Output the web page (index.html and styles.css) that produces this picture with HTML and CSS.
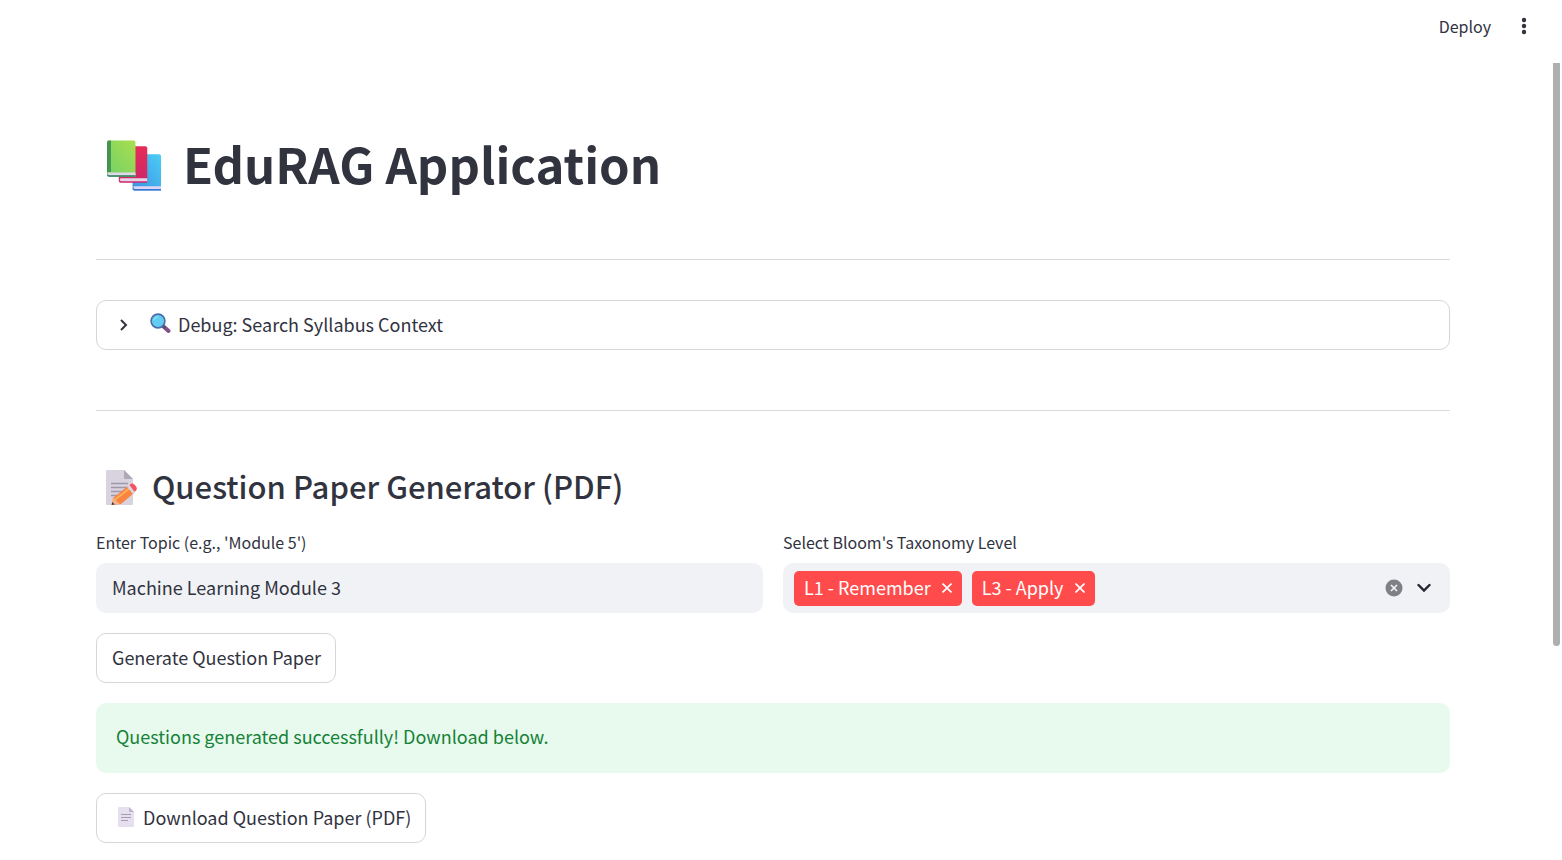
FILE: index.html
```html
<!DOCTYPE html>
<html lang="en">
	<head>
		<meta charset="UTF-8">
		<title>EduRAG Application</title>
		<link rel="stylesheet" href="styles.css">
	</head>
	<body>
		<header class="toolbar">
			<button type="button" class="deploy">Deploy</button>
			<button type="button" class="menu" aria-label="Main menu">
				<svg width="20" height="20" viewBox="0 0 20 20" fill="#31333f">
					<circle cx="10" cy="4" r="2.2"/>
					<circle cx="10" cy="10" r="2.2"/>
					<circle cx="10" cy="16" r="2.2"/>
				</svg>
			</button>
		</header>

		<main class="container">
			<h1 class="title">
				<svg class="books" width="55" height="52" viewBox="0 0 56 52" aria-hidden="true">
					<defs>
						<linearGradient id="green" x1="1" y1="0" x2="0" y2="1">
							<stop offset="0" stop-color="#a9df4e"/>
							<stop offset="1" stop-color="#73cf68"/>
						</linearGradient>
						<linearGradient id="blue" x1="1" y1="0" x2="0" y2="1">
							<stop offset="0" stop-color="#4ccdf5"/>
							<stop offset="1" stop-color="#3c91e2"/>
						</linearGradient>
						<linearGradient id="red" x1="0" y1="0" x2="0" y2="1">
							<stop offset="0" stop-color="#e52c57"/>
							<stop offset="1" stop-color="#cb2869"/>
						</linearGradient>
					</defs>
					<path d="M28 14h25q2 0 2 2v35H28q-2 0-2-2V16q0-2 2-2z" fill="url(#blue)"/>
					<path d="M28 46.500h27v3H28.500q-1.500 0-1.500-1.500t1-1.500z" fill="#ded5f5"/>
					<path d="M26 49q0 2 2 2h27v-1.500H28z" fill="#3977d7"/>
					<path d="M14 6h25q2 0 2 2v35H14q-2 0-2-2V8q0-2 2-2z" fill="url(#red)"/>
					<path d="M14.500 38.500H41v3H14.500q-1.500 0-1.500-1.500t1.500-1.500z" fill="#e6d5e9"/>
					<path d="M2 0h25q2 0 2 2v35H2q-2 0-2-2V2q0-2 2-2z" fill="url(#green)"/>
					<path d="M2 0h2v32H0V2q0-2 2-2z" fill="#439451"/>
					<path d="M2 32.500h27v3.200H2q-1.500 0-1.500-1.600T2 32.500z" fill="#e2d7ec"/>
					<path d="M0 34.500q0 2.500 2 2.500h27v-1.500H2z" fill="#318066"/>
				</svg>
				EduRAG Application
			</h1>

			<hr class="line">

			<details class="expander">
				<summary>
					<svg class="arrow" width="10" height="14" viewBox="0 0 10 14" fill="none" stroke="#31333f" stroke-width="2"><path d="M2 2l5 5-5 5"/></svg>
					<svg class="search" width="21" height="21" viewBox="0 0 21 21" aria-hidden="true">
						<path d="M13 13l5.500 5" stroke="#835087" stroke-width="4" stroke-linecap="round"/>
						<path d="M12.500 12.500l2.500 2.500" stroke="#4d4f78" stroke-width="2.500"/>
						<circle cx="8" cy="8" r="6.900" fill="#62cdf1" stroke="#4c6ca9" stroke-width="1.600"/>
						<path d="M4 7q1-3 4-3.500" fill="none" stroke="#8fe0f8" stroke-width="1.200"/>
					</svg>
					Debug: Search Syllabus Context
				</summary>
			</details>

			<hr class="line second">

			<h2 class="subtitle">
				<svg class="memo" width="32" height="36" viewBox="0 0 32 36" aria-hidden="true">
					<path d="M1 0h17l9 9v25q0 1-1 1H1q-1 0-1-1V1q0-1 1-1z" fill="#d8d3df"/>
					<path d="M18 0l9 9h-8q-1 0-1-1z" fill="#afa8b8"/>
					<path d="M5 13.500h17M5 17.500h17M5 21.500h14M5 25.500h8" stroke="#9e98aa" stroke-width="1.300"/>
					<path d="M7 28L22 16l6 7-13 11-9 1z" fill="#f98442"/>
					<path d="M8.500 30L24 18" stroke="#ffad57" stroke-width="2"/>
					<path d="M7 28l7 6-8 1z" fill="#f6b184"/>
					<path d="M6.300 32l2.500 2.500L5.500 35z" fill="#4b3540"/>
					<path d="M21 17l2.500-2 6 7-2.500 2z" fill="#ddd2e2"/>
					<path d="M23.500 15l1.500-1.200q1.800-1 3.300.7l2 2.300q1.300 1.800-.1 3.500l-1.700 1.500z" fill="#f2535c"/>
				</svg>
				Question Paper Generator (PDF)
			</h2>

			<div class="row">
				<div class="col">
					<label for="topic">Enter Topic (e.g., 'Module 5')</label>
					<input type="text" id="topic" class="field" value="Machine Learning Module 3">
				</div>
				<div class="col">
					<label id="level">Select Bloom's Taxonomy Level</label>
					<div class="field select" role="group" aria-labelledby="level">
						<span class="tag">L1 - Remember
							<button type="button" aria-label="Remove L1 - Remember"><svg width="10" height="10" viewBox="0 0 10 10" stroke="#fff" stroke-width="1.700"><path d="M.5.5l9 9M9.500.5l-9 9"/></svg></button>
						</span>
						<span class="tag">L3 - Apply
							<button type="button" aria-label="Remove L3 - Apply"><svg width="10" height="10" viewBox="0 0 10 10" stroke="#fff" stroke-width="1.700"><path d="M.5.5l9 9M9.500.5l-9 9"/></svg></button>
						</span>
						<div class="tools">
							<button type="button" aria-label="Clear all">
								<svg width="18" height="18" viewBox="0 0 18 18"><circle cx="9" cy="9" r="8.500" fill="#7f8086"/><path d="M6 6l6 6M12 6l-6 6" stroke="#f0f2f6" stroke-width="1.700"/></svg>
							</button>
							<button type="button" aria-label="Open">
								<svg width="14" height="10" viewBox="0 0 14 10" fill="none" stroke="#24262f" stroke-width="2.400"><path d="M1.500 2L7 7.500 12.500 2" stroke-linecap="round"/></svg>
							</button>
						</div>
					</div>
				</div>
			</div>

			<button type="button" class="btn">Generate Question Paper</button>

			<div class="success" role="alert">Questions generated successfully! Download below.</div>

			<button type="button" class="btn">
				<svg class="page" width="16" height="20" viewBox="0 0 16 20" aria-hidden="true">
					<path d="M1 0h10l5 5v14q0 1-1 1H1q-1 0-1-1V1q0-1 1-1z" fill="#e5dfee"/>
					<path d="M11 0l5 5h-4q-1 0-1-1z" fill="#bdb3cb"/>
					<path d="M3 7.500h10M3 10.500h10M3 13.500h7" stroke="#a69caf" stroke-width="1"/>
				</svg>
				Download Question Paper (PDF)
			</button>
		</main>

		<div class="scrollbar"></div>
	</body>
</html>
```
FILE: styles.css
```css
*{
	box-sizing: border-box;
}
body{
	margin: 0;
	background-color: #fff;
	color: #31333f;
	font-family: "Noto Sans CJK SC", "Open Sans", sans-serif;
	font-size: 18px;
	line-height: 30px;
}
svg{
	display: block;
	flex: none;
}
button{
	padding: 0;
	border: 0;
	background: none;
	color: inherit;
	font: inherit;
	cursor: pointer;
}
.toolbar{
	display: flex;
	justify-content: flex-end;
	align-items: center;
	gap: 23px;
	height: 51px;
	padding-right: 28px;
}
.deploy{
	font-size: 16px;
}
.container{
	display: flex;
	flex-direction: column;
	align-items: flex-start;
	padding: 79px 112px 17px 96px;
}
.title,
.subtitle{
	display: flex;
	align-items: center;
	margin: 0;
}
.title{
	gap: 21px;
	padding-left: 11px;
	font-size: 49px;
	font-weight: 700;
	line-height: 66px;
}
.books{
	margin-top: 6px;
}
.subtitle{
	gap: 14px;
	margin-bottom: 23px;
	padding-left: 10px;
	font-size: 31px;
	font-weight: 500;
	line-height: 44px;
}
.memo{
	margin-top: 4px;
}
.line{
	width: 100%;
	height: 1px;
	margin: 63px 0 40px;
	border: 0;
	background-color: #d9dadd;
}
.second{
	margin: 60px 0 53px;
}
.expander{
	width: 100%;
	border: 1px solid #d6d6d9;
	border-radius: 10px;
}
.expander summary{
	display: flex;
	align-items: center;
	height: 48px;
	padding: 0 0 3px 22px;
	cursor: pointer;
}
.arrow{
	margin: 3px 21px 0 0;
}
.search{
	margin-right: 7px;
}
.row{
	display: flex;
	gap: 20px;
	width: 100%;
	margin-bottom: 20px;
}
.col{
	flex: 1;
	min-width: 0;
}
.col label{
	display: block;
	margin-bottom: 9px;
	font-size: 16px;
	line-height: 23px;
}
.field{
	width: 100%;
	height: 50px;
	padding: 0 16px 3px;
	border: 0;
	border-radius: 10px;
	background-color: #f0f2f6;
	color: inherit;
	font: inherit;
}
.select{
	display: flex;
	align-items: center;
	gap: 10px;
	padding: 0 19px 0 11px;
}
.tag{
	display: flex;
	align-items: center;
	gap: 11px;
	height: 35px;
	padding: 0 10px 3px;
	border-radius: 5px;
	background-color: #ff4b4b;
	color: #fff;
	white-space: nowrap;
}
.tag svg{
	margin-top: 3px;
}
.tools{
	display: flex;
	align-items: center;
	gap: 14px;
	margin-left: auto;
}
.btn{
	display: flex;
	align-items: center;
	height: 50px;
	padding: 0 14px 3px 15px;
	border: 1px solid #d6d6d9;
	border-radius: 10px;
}
.page{
	margin: 0 9px 0 6px;
}
.success{
	width: 100%;
	margin: 20px 0;
	padding: 18px 20px 22px;
	border-radius: 10px;
	background-color: #e8f9ee;
	color: #158237;
}
/* overlay scroll thumb */
.scrollbar{
	position: fixed;
	top: 63px;
	right: 2px;
	width: 7px;
	height: 583px;
	border-radius: 0 0 4px 4px;
	background-color: #afafaf;
}
```
